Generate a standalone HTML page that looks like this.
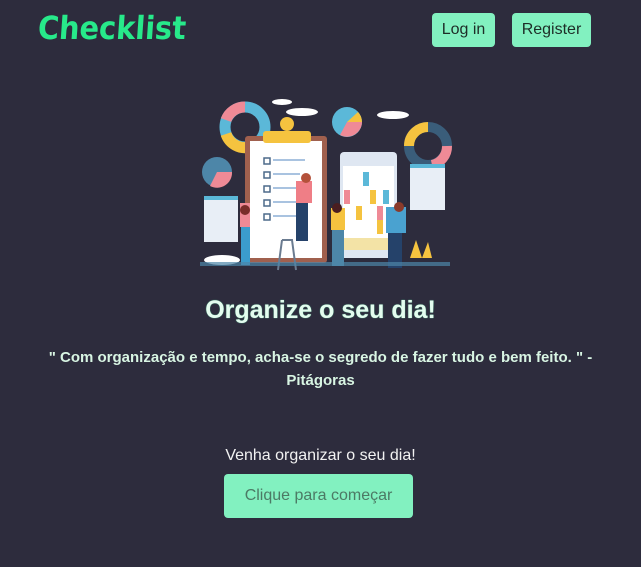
<!DOCTYPE html>
<html><head><meta charset="utf-8"><style>
html,body{margin:0;padding:0;}
body{width:641px;height:567px;background:#2d2c3d;font-family:"Liberation Sans",sans-serif;position:relative;overflow:hidden;}
.logo{position:absolute;left:38px;top:9px;font-family:"DejaVu Sans Condensed","DejaVu Sans",sans-serif;font-weight:bold;font-size:32px;color:#27e98a;transform:skewX(-4deg);}
.btn{position:absolute;background:#82f1c0;color:#1e2d27;border-radius:4px;font-size:16px;text-align:center;line-height:34px;height:34px;}
.t{position:absolute;left:0;width:641px;text-align:center;}
h1{margin:0;font-size:25px;font-weight:bold;color:#e4fcef;text-shadow:0 0 1px #5ee8a8;}
.q{font-size:15px;font-weight:bold;color:#d8f5e3;line-height:23px;}
.cta{position:absolute;left:224px;top:474px;width:189px;height:44px;background:#82f1c0;border-radius:4px;color:#4c7a65;font-size:16px;text-align:center;line-height:44px;}
</style></head><body>
<div class="logo">Checklist</div>
<div class="btn" style="left:432px;top:13px;width:63px;">Log in</div>
<div class="btn" style="left:512px;top:13px;width:79px;">Register</div>

<svg style="position:absolute;left:0;top:0" width="641" height="300">
 <ellipse cx="282" cy="102" rx="10" ry="3" fill="#fff"/>
 <ellipse cx="302" cy="112" rx="16" ry="4" fill="#fff"/>
 <ellipse cx="393" cy="115" rx="16" ry="4" fill="#fff"/>
 <circle cx="245" cy="127" r="20" fill="none" stroke="#5bb8d8" stroke-width="11"/>
 <path d="M245 107 A20 20 0 0 0 226 120" fill="none" stroke="#ef8a96" stroke-width="11"/>
 <path d="M226 134 A20 20 0 0 0 250 147" fill="none" stroke="#f5c33f" stroke-width="11"/>
 <circle cx="428" cy="146" r="19" fill="none" stroke="#3a5d7a" stroke-width="10"/>
 <path d="M409 146 A19 19 0 0 1 428 127" fill="none" stroke="#f5c33f" stroke-width="10"/>
 <path d="M447 146 A19 19 0 0 1 432 165" fill="none" stroke="#ef8a96" stroke-width="10"/>
 <circle cx="347" cy="122" r="15" fill="#5bb8d8"/>
 <path d="M347 122 L362 122 A15 15 0 0 1 340 135Z" fill="#ef8a96"/>
 <path d="M347 122 L358 112 A15 15 0 0 1 362 122Z" fill="#f5c33f"/>
 <circle cx="217" cy="172" r="15" fill="#4d86a8"/>
 <path d="M217 172 L232 172 A15 15 0 0 1 210 186Z" fill="#ef8a96"/>
 <rect x="245" y="136" width="82" height="127" rx="3" fill="#a0604e"/>
 <rect x="250" y="141" width="72" height="117" fill="#fff"/>
 <rect x="263" y="131" width="48" height="12" rx="3" fill="#f5c33f"/>
 <circle cx="287" cy="124" r="7" fill="#f5c33f"/>
 <g fill="none" stroke="#4d6a8a" stroke-width="1.5">
  <rect x="264" y="158" width="6" height="6"/><rect x="264" y="172" width="6" height="6"/><rect x="264" y="186" width="6" height="6"/><rect x="264" y="200" width="6" height="6"/><rect x="264" y="214" width="6" height="6"/>
 </g>
 <g stroke="#a9c3e0" stroke-width="2"><line x1="273" y1="160" x2="305" y2="160"/><line x1="273" y1="174" x2="300" y2="174"/><line x1="273" y1="188" x2="300" y2="188"/><line x1="273" y1="202" x2="298" y2="202"/><line x1="273" y1="216" x2="296" y2="216"/></g>
 <rect x="340" y="152" width="57" height="106" rx="4" fill="#dfe7f2"/>
 <rect x="343" y="166" width="51" height="72" fill="#fff"/>
 <rect x="363" y="172" width="6" height="14" fill="#5bb8d8"/>
 <rect x="344" y="190" width="6" height="14" fill="#ef8a96"/>
 <rect x="370" y="190" width="6" height="14" fill="#f5c33f"/>
 <rect x="383" y="190" width="6" height="14" fill="#5bb8d8"/>
 <rect x="356" y="206" width="6" height="14" fill="#f5c33f"/>
 <rect x="377" y="206" width="6" height="14" fill="#ef8a96"/>
 <rect x="377" y="220" width="6" height="14" fill="#f5c33f"/>
 <rect x="344" y="238" width="50" height="12" fill="#f3e3a6"/>
 <rect x="204" y="196" width="34" height="46" fill="#e8eef6"/><rect x="204" y="196" width="34" height="4" fill="#5bb8d8"/>
 <rect x="410" y="164" width="35" height="46" fill="#e8eef6"/><rect x="410" y="164" width="35" height="4" fill="#5bb8d8"/>
 <rect x="240" y="203" width="10" height="24" fill="#ef8a96"/><rect x="241" y="227" width="9" height="38" fill="#3b9ccc"/><circle cx="245" cy="210" r="5" fill="#7a2d2a"/>
 <rect x="296" y="181" width="16" height="22" fill="#ef7e86"/><rect x="296" y="203" width="12" height="38" fill="#25426a"/><circle cx="306" cy="178" r="5" fill="#b4513a"/>
 <path d="M282 240 L292 240 L296 270 M282 240 L278 270" stroke="#6a7b90" stroke-width="2" fill="none"/>
 <rect x="331" y="208" width="14" height="22" fill="#f5c33f"/><rect x="332" y="230" width="12" height="36" fill="#4d86a8"/><circle cx="337" cy="208" r="5" fill="#4a1e20"/>
 <rect x="386" y="207" width="20" height="26" fill="#4aa2d0"/><rect x="388" y="233" width="14" height="35" fill="#25426a"/><circle cx="399" cy="207" r="5" fill="#8a3a2a"/>
 <path d="M410 258 L416 240 L422 258 L428 242 L432 258Z" fill="#f5c33f"/>
 <ellipse cx="222" cy="260" rx="18" ry="5" fill="#fff"/>
 <rect x="200" y="262" width="250" height="4" fill="#4d86a8" opacity="0.7"/>
</svg>

<div class="t" style="top:296px;"><h1>Organize o seu dia!</h1></div>
<div class="t q" style="top:346px;">" Com organização e tempo, acha-se o segredo de fazer tudo e bem feito. " -<br>Pitágoras</div>
<div class="t" style="top:447px;font-size:16px;color:#f2f2f2;">Venha organizar o seu dia!</div>
<div class="cta">Clique para começar</div>
</body></html>
